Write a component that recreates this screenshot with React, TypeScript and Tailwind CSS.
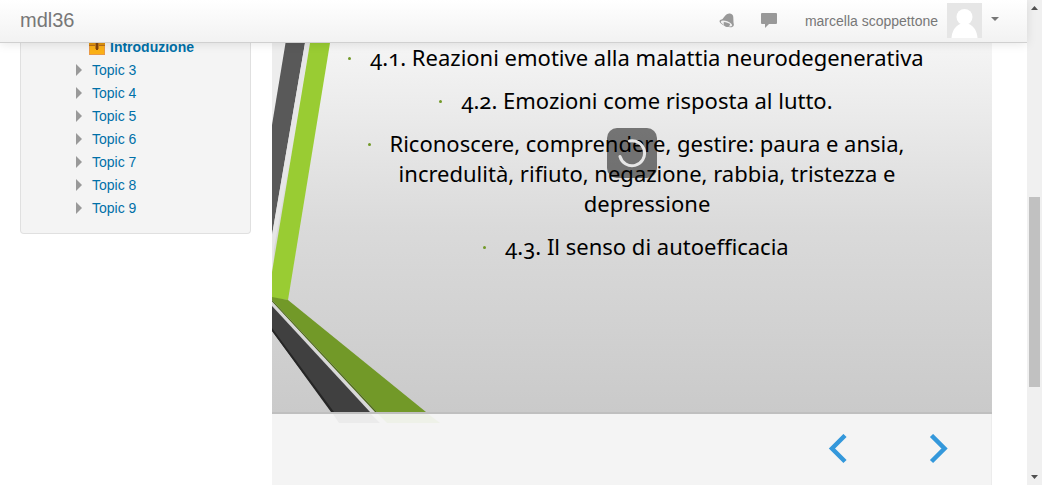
import React from "react";

const topics = ["Topic 3", "Topic 4", "Topic 5", "Topic 6", "Topic 7", "Topic 8", "Topic 9"];

const points: string[][] = [
  ["4.1. Reazioni emotive alla malattia neurodegenerativa"],
  ["4.2. Emozioni come risposta al lutto."],
  [
    "Riconoscere, comprendere, gestire: paura e ansia,",
    "incredulità, rifiuto, negazione, rabbia, tristezza e",
    "depressione",
  ],
  ["4.3. Il senso di autoefficacia"],
];

function BellIcon() {
  return (
    <svg width="16" height="16" viewBox="0 0 16 16" aria-hidden="true">
      <path
        d="M5.500 3.500C7 1.500 9 .300 11 .600c2.200.300 3.200 1.700 3.300 3.600l.2 5.300c.1 1.300.6 1.800.3 2.800-.7 2.200-3.500 2.600-7.300 1.300C3.200 12.100.100 9.800.600 7.800.900 6.600 2.300 6.700 3.200 6.200 4.100 5.700 4.600 4.700 5.500 3.500z"
        fill="#999"
      />
      <ellipse cx="7.500" cy="10.500" rx="6" ry="2.300" transform="rotate(20 7.500 10.500)" fill="#f0f0f0" />
      <path d="M4.800 8.900c2.300.2 4.500 1 6.300 2.100-.4 2.400-2 3.400-3.900 2.800-1.900-.6-2.900-2.500-2.400-4.900z" fill="#999" />
    </svg>
  );
}

function ChatIcon() {
  return (
    <svg width="16" height="15" viewBox="0 0 16 15" aria-hidden="true">
      <path d="M1 0h14a1 1 0 0 1 1 1v9a1 1 0 0 1-1 1H8l-4 4V11H1a1 1 0 0 1-1-1V1a1 1 0 0 1 1-1z" fill="#999" />
    </svg>
  );
}

function Avatar() {
  return (
    <svg width="35" height="35" viewBox="0 0 35 35" role="img" aria-label="marcella scoppettone">
      <rect width="35" height="35" fill="#e6e6e6" />
      <path d="M4.500 35C5 28 8 23.500 13 21h9c5 2.500 8 7 8.500 14z" fill="#fff" />
      <circle cx="17.500" cy="14" r="8" fill="#fff" />
    </svg>
  );
}

function PackageIcon() {
  return (
    <svg width="16" height="16" viewBox="0 0 16 16" aria-hidden="true" className="shrink-0">
      <path d="M2 0h12l2 5v11H0V5z" fill="#e99a48" />
      <path d="M1 6h14v9H1z" fill="#fbb117" />
      <path d="M0 4h16v3H0z" fill="#e0930f" />
      <path d="M0 6h16v1H0z" fill="#b8701c" />
      <path d="M6 0h4v10H6z" fill="#c27a1c" />
      <path d="M7 2h2v9H7z" fill="#80450f" />
    </svg>
  );
}

function Ribbons() {
  return (
    <svg
      width="180"
      height="381"
      viewBox="272 43 180 381"
      aria-hidden="true"
      className="absolute top-0 left-0"
    >
      <path d="M272 43h13l-13 80z" fill="#ededed" />
      <path d="M285.500 43H305l-33 192V125z" fill="#595959" />
      <path d="M305 43h5l-36 206-2 50v-64z" fill="#e6e6e6" />
      <path d="M310 43h20l-42 257-16-2v-26z" fill="#99cc33" />
      <path d="M272 297l16 3 138 112h-49L272 300z" fill="#729928" />
      <path d="M272 300l105 112h-3L272 302z" fill="#4d6a16" />
      <path d="M272 301.500L375 412h-5L272 305.500z" fill="#d8d8d8" />
      <path d="M272 306l98 106h-38L272 331z" fill="#404040" />
      <path d="M272 328l62 84h-3L272 331z" fill="#262626" />
      <path d="M333 414h38l9 9h-41z" fill="#ebebeb" />
      <path d="M378 414h50l12 9h-53z" fill="#eef1e8" />
    </svg>
  );
}

function Header() {
  return (
    <header className="relative z-10 flex h-[43px] shrink-0 items-center border-b border-[#d0d0d0] bg-linear-to-b from-white to-[#f2f2f2] px-5 pb-px shadow-[0_1px_10px_rgba(0,0,0,0.1)]">
      <a href="#home" className="pb-0.5 text-xl leading-5 text-[#777]">
        mdl36
      </a>
      <div className="ml-auto flex items-center pr-2">
        <button type="button" aria-label="Notifiche" className="mr-[26px]">
          <BellIcon />
        </button>
        <button type="button" aria-label="Messaggi" className="mr-7">
          <ChatIcon />
        </button>
        <button type="button" className="flex items-center text-sm text-[#777]">
          <span className="mr-[9px]">marcella scoppettone</span>
          <Avatar />
          <svg width="8" height="4" viewBox="0 0 8 4" aria-hidden="true" className="mb-1 ml-[9px]">
            <path d="M0 0h8L4 4z" fill="#777" />
          </svg>
        </button>
      </div>
    </header>
  );
}

function Sidebar() {
  return (
    <nav className="w-[231px] shrink-0 self-start rounded-b border border-t-0 border-[#e0e0e0] bg-[#f4f4f4] pb-[14px] text-sm text-[#0070a8]">
      <ul>
        <li className="-mt-2 flex h-[23px] items-center pl-[68px] font-bold">
          <PackageIcon />
          <a href="#introduzione" className="ml-[5px]">
            Introduzione
          </a>
        </li>
        {topics.map((topic) => (
          <li key={topic} className="flex h-[23px] items-center pl-[55px]">
            <svg width="6" height="12" viewBox="0 0 6 12" aria-hidden="true">
              <path d="M0 0l6 6-6 6z" fill="#999" />
            </svg>
            <a href="#topic" className="ml-[10px]">
              {topic}
            </a>
          </li>
        ))}
      </ul>
    </nav>
  );
}

function Spinner() {
  return (
    <div
      role="status"
      aria-label="Caricamento"
      className="absolute top-[85px] left-1/2 flex size-[50px] -translate-x-1/2 items-center justify-center rounded-[10px] bg-black/50"
    >
      <svg width="30" height="30" viewBox="0 0 30 30" fill="none" aria-hidden="true">
        <path d="M12.500 3A12.500 12.500 0 1 1 3 18.500" stroke="#e6e6e6" strokeWidth="3" strokeLinecap="round" />
      </svg>
    </div>
  );
}

function Slide() {
  return (
    <main className="flex min-w-0 flex-1 flex-col bg-[#f4f4f4]">
      <section className="relative min-h-[371px] border-b-2 border-[#bfbfbf] bg-linear-to-b from-[#f5f5f5] via-[#dadada] to-[#cacaca]">
        <Ribbons />
        <ul className="relative -mt-px flex flex-col gap-[13px] pl-[30px] text-center font-['Noto_Sans',sans-serif] text-[22px] leading-[30px] text-black oldstyle-nums">
          {points.map((lines) => (
            <li key={lines[0]}>
              {lines.map((line, i) => (
                <span key={line} className="block whitespace-nowrap">
                  {i === 0 && (
                    <span
                      aria-hidden="true"
                      className="-ml-[22px] inline-block w-[22px] text-left align-middle"
                    >
                      <span className="mb-1 block size-[3px] rounded-full bg-[#729928]" />
                    </span>
                  )}
                  {line}
                </span>
              ))}
            </li>
          ))}
        </ul>
        <Spinner />
      </section>
      <div className="flex flex-1 items-start justify-end gap-[82px] border-r border-[#ececec] pt-5 pr-[43px]">
        <button type="button" aria-label="Precedente">
          <svg width="19" height="30" viewBox="0 0 19 30" fill="none" stroke="#3498db" strokeWidth="4.500" aria-hidden="true">
            <path d="M17 1.500L4 14.500l13 13" />
          </svg>
        </button>
        <button type="button" aria-label="Successiva">
          <svg width="19" height="30" viewBox="0 0 19 30" fill="none" stroke="#3498db" strokeWidth="4.500" aria-hidden="true">
            <path d="M2.500 1.500l13 13-13 13" />
          </svg>
        </button>
      </div>
    </main>
  );
}

function ScrollTrack() {
  return (
    <div aria-hidden="true" className="flex w-[15px] shrink-0 flex-col items-center bg-[#f0f0f0] py-[6px]">
      <svg width="7" height="4" viewBox="0 0 7 4">
        <path d="M0 4h7L3.500 0z" fill="#505050" />
      </svg>
      <div className="grow-[187]" />
      <div className="w-[11px] grow-[190] bg-[#c1c1c1]" />
      <div className="grow-[88]" />
      <svg width="7" height="4" viewBox="0 0 7 4">
        <path d="M0 0h7L3.500 4z" fill="#505050" />
      </svg>
    </div>
  );
}

export default function App() {
  return (
    <div className="flex h-screen overflow-hidden bg-white font-['Liberation_Sans',Arial,sans-serif]">
      <div className="flex min-w-0 flex-1 flex-col">
        <Header />
        <div className="flex flex-1 gap-[21px] pr-[35px] pl-5">
          <Sidebar />
          <Slide />
        </div>
      </div>
      <ScrollTrack />
    </div>
  );
}
